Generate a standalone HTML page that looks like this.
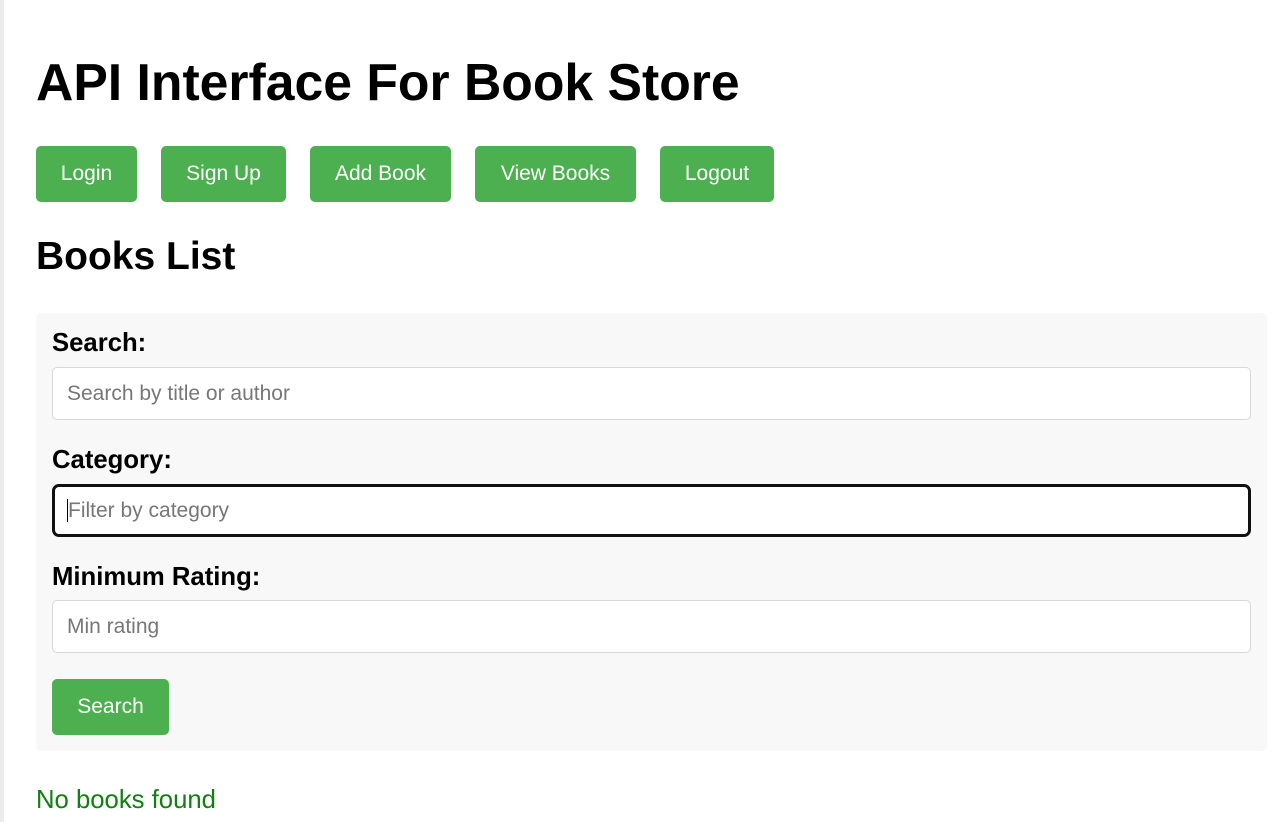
<!DOCTYPE html>
<html><head><meta charset="utf-8"><style>
body{margin:0;width:1280px;height:822px;overflow:hidden;background:#fff;font-family:"Liberation Sans",Arial,sans-serif;position:relative}
.strip{position:absolute;left:0;top:0;width:4px;height:822px;background:#ececec}
h1{position:absolute;left:36px;top:52px;margin:0;font-size:51.7px;font-weight:bold;line-height:60px}
.btn{position:absolute;top:146px;height:56px;background:#4caf50;color:#fff;border-radius:5px;font-size:21px;line-height:56px;text-align:center}
h2{position:absolute;left:36px;top:234px;margin:0;font-size:39px;font-weight:bold;line-height:46px}
.panel{position:absolute;left:36px;top:313px;width:1231px;height:438px;background:#f8f8f8;border-radius:5px}
.lab{position:absolute;left:52px;font-size:25.7px;font-weight:bold;line-height:28px}
.inp{position:absolute;left:52px;height:51px;background:#fff;border:1px solid #d8d8d8;border-radius:5px;color:#777;font-size:21px;line-height:51px;padding-left:14px;width:1183px}
.foc{border:3px solid #111;border-radius:7px;height:47px;line-height:47px;width:1181px;padding-left:12px}
.nb{position:absolute;left:36px;top:785px;font-size:25.7px;line-height:30px;color:#118011}
</style></head><body>
<div class="strip"></div>
<h1>API Interface For Book Store</h1>
<div class="btn" style="left:36px;width:101px">Login</div>
<div class="btn" style="left:161px;width:125px">Sign Up</div>
<div class="btn" style="left:310px;width:141px">Add Book</div>
<div class="btn" style="left:475px;width:161px">View Books</div>
<div class="btn" style="left:660px;width:114px">Logout</div>
<h2>Books List</h2>
<div class="panel"></div>
<div class="lab" style="top:329px">Search:</div>
<div class="inp" style="top:367px">Search by title or author</div>
<div class="lab" style="top:446px">Category:</div>
<div class="inp foc" style="top:484px"><span style="border-left:1px solid #000;">Filter by category</span></div>
<div class="lab" style="top:563px">Minimum Rating:</div>
<div class="inp" style="top:600px">Min rating</div>
<div class="btn" style="left:52px;top:679px;width:117px">Search</div>
<div class="nb">No books found</div>
</body></html>
